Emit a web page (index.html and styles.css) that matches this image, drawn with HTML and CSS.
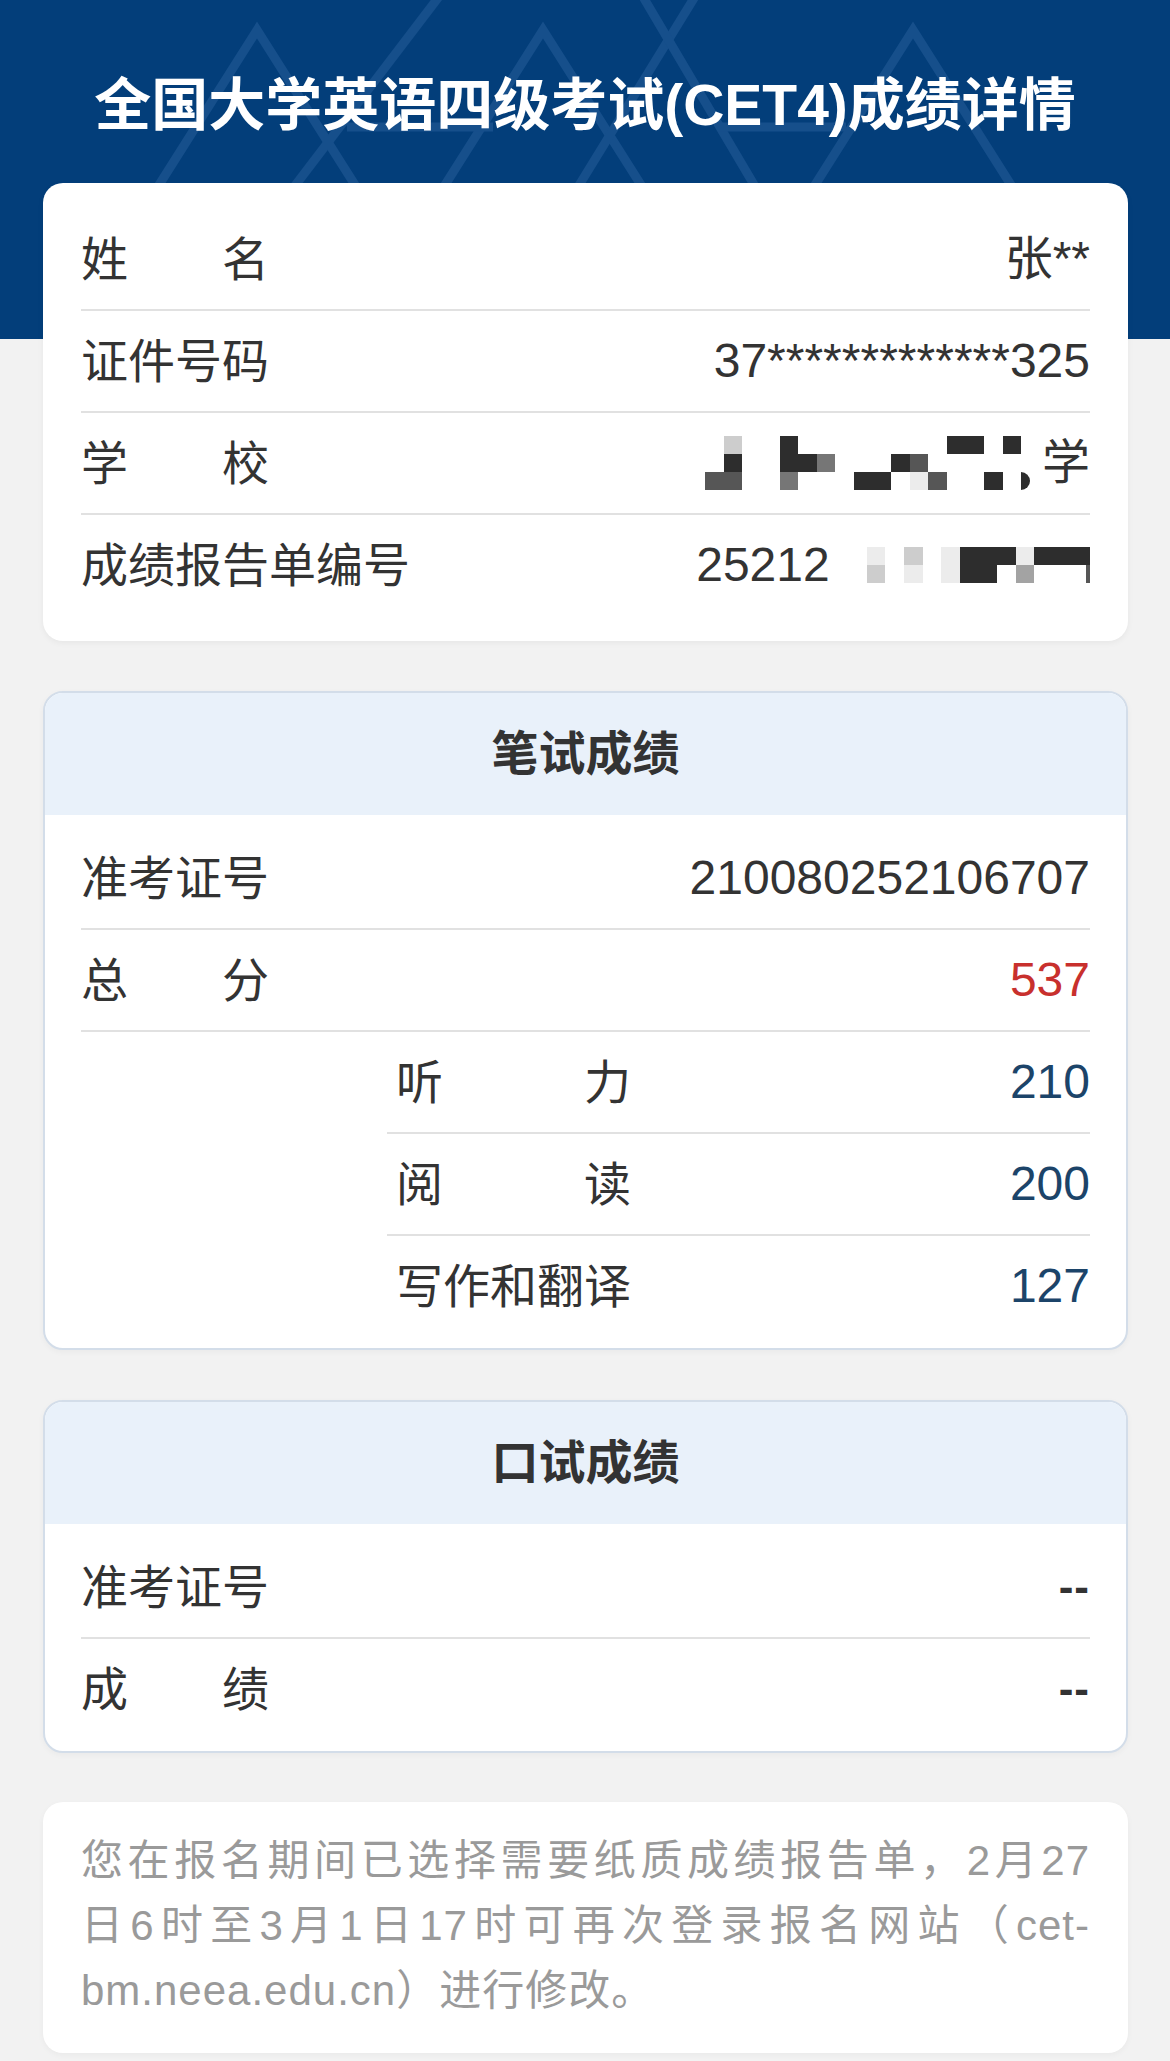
FILE: index.html
```html
<!DOCTYPE html>
<html lang="zh-CN">
<head>
<meta charset="utf-8">
<title>全国大学英语四级考试(CET4)成绩详情</title>
<link rel="stylesheet" href="styles.css">
</head>
<body>
<header class="top">
  <svg class="pattern" viewBox="0 0 1170 339" aria-hidden="true">
    <g fill="none" stroke="#164f8b" stroke-width="9" stroke-linejoin="miter">
      <polyline points="140,215 257,30 374,215"/>
      <polyline points="426,215 543,30 660,215"/>
      <polyline points="796,215 913,30 1030,215"/>
      <line x1="444" y1="-10" x2="278" y2="208"/>
      <line x1="347" y1="127" x2="493" y2="127"/>
      <line x1="699" y1="-10" x2="570" y2="200"/>
      <line x1="639" y1="-10" x2="763" y2="200"/>
      <line x1="719" y1="127" x2="846" y2="127"/>
    </g>
  </svg>
  <h1 class="title">全国大学英语四级考试(CET4)成绩详情</h1>
</header>

<main class="content">
  <section class="card info">
    <div class="row">
      <span class="label sp4"><span>姓</span><span>名</span></span>
      <span class="value">张**</span>
    </div>
    <div class="row">
      <span class="label">证件号码</span>
      <span class="value">37*************325</span>
    </div>
    <div class="row">
      <span class="label sp4"><span>学</span><span>校</span></span>
      <span class="value masked">
        <span class="mosaic school">
          <i></i><i class="k5"></i><i></i><i></i><i class="k1"></i><i></i><i></i><i></i><i></i><i></i><i></i><i></i><i></i><i class="k1"></i><i class="k1"></i><i></i><i class="k1"></i><i></i>
          <i></i><i class="k1"></i><i></i><i></i><i class="k1"></i><i class="k1"></i><i class="k3"></i><i></i><i></i><i></i><i class="k1"></i><i class="k2"></i><i></i><i></i><i></i><i></i><i></i><i></i>
          <i class="k2"></i><i class="k2"></i><i></i><i></i><i class="k3"></i><i></i><i></i><i></i><i class="k1"></i><i class="k1"></i><i></i><i class="k6"></i><i class="k2"></i><i></i><i></i><i class="k1"></i><i></i><i class="k1 half"></i>
        </span>学
      </span>
    </div>
    <div class="row">
      <span class="label">成绩报告单编号</span>
      <span class="value masked">25212
        <span class="mosaic report">
          <i></i><i></i><i class="k6"></i><i></i><i class="k5"></i><i></i><i class="k6"></i><i class="k1"></i><i class="k1"></i><i class="k1"></i><i class="k6"></i><i class="k1"></i><i class="k1"></i><i class="k1"></i>
          <i></i><i></i><i class="k5"></i><i></i><i class="k6"></i><i></i><i class="k6"></i><i class="k1"></i><i class="k1"></i><i></i><i class="k4"></i><i></i><i></i><i class="k2 thin"></i>
        </span>
      </span>
    </div>
  </section>

  <section class="card panel">
    <h2 class="card-head">笔试成绩</h2>
    <div class="card-body">
      <div class="row">
        <span class="label">准考证号</span>
        <span class="value">210080252106707</span>
      </div>
      <div class="row">
        <span class="label sp4"><span>总</span><span>分</span></span>
        <span class="value total">537</span>
      </div>
      <div class="subrows">
        <div class="row sub">
          <span class="label sp5"><span>听</span><span>力</span></span>
          <span class="value part">210</span>
        </div>
        <div class="row sub">
          <span class="label sp5"><span>阅</span><span>读</span></span>
          <span class="value part">200</span>
        </div>
        <div class="row sub">
          <span class="label">写作和翻译</span>
          <span class="value part">127</span>
        </div>
      </div>
    </div>
  </section>

  <section class="card panel">
    <h2 class="card-head">口试成绩</h2>
    <div class="card-body">
      <div class="row">
        <span class="label">准考证号</span>
        <span class="value dash">--</span>
      </div>
      <div class="row">
        <span class="label sp4"><span>成</span><span>绩</span></span>
        <span class="value dash">--</span>
      </div>
    </div>
  </section>

  <section class="card note">
    <p class="note-text">
      <span class="ln full">您在报名期间已选择需要纸质成绩报告单，2月27</span>
      <span class="ln full">日6时至3月1日17时可再次登录报名网站（cet-</span>
      <span class="ln">bm.neea.edu.cn）进行修改。</span>
    </p>
  </section>
</main>
</body>
</html>
```

FILE: styles.css
```css
* {
  box-sizing: border-box;
}

html,
body {
  margin: 0;
  padding: 0;
}

body {
  width: 1170px;
  background: #f2f2f2;
  color: #333;
  font-family: "Liberation Sans", "Noto Sans CJK SC", sans-serif;
}

/* ---------- header ---------- */
.top {
  position: relative;
  height: 339px;
  background: #033e7a;
  overflow: hidden;
}

.pattern {
  position: absolute;
  left: 0;
  top: 0;
  width: 1170px;
  height: 339px;
}

.title {
  position: relative;
  margin: 0;
  padding-top: 64px;
  text-align: center;
  color: #fff;
  font-size: 57px;
  line-height: 82px;
  font-weight: 700;
}

/* ---------- content ---------- */
.content {
  position: relative;
  margin: -156px 42px 0 43px;
  padding-bottom: 10px;
  display: flex;
  flex-direction: column;
  gap: 50px;
}

.card {
  background: #fff;
  border-radius: 20px;
  overflow: hidden;
}

.info {
  padding: 26px 38px;
  box-shadow: 0 2px 6px rgba(0, 0, 0, 0.05);
}

.row {
  display: flex;
  align-items: center;
  justify-content: space-between;
  height: 102px;
  border-bottom: 2px solid #e1e1e1;
  font-size: 47px;
  line-height: 1;
}

.row:last-child {
  height: 100px;
  border-bottom: none;
}

.label {
  white-space: nowrap;
  color: #333;
}

.sp4 {
  display: flex;
  justify-content: space-between;
  width: 188px;
}

.sp5 {
  display: flex;
  justify-content: space-between;
  width: 235px;
}

.value {
  white-space: nowrap;
  color: #333;
  font-size: 48px;
}

.total {
  color: #c8302d;
}

.part {
  color: #1c4469;
}

.dash {
  font-weight: 700;
  letter-spacing: 1px;
  font-size: 44px;
}

/* masked (pixelated) values */
.masked {
  display: flex;
  align-items: center;
}

.mosaic {
  display: grid;
  grid-auto-rows: 18px;
}

.mosaic i {
  display: block;
}

.school {
  grid-template-columns: repeat(18, 18.6px);
  margin-right: 2px;
}

.report {
  grid-template-columns: repeat(14, 18.6px);
}

.k1 { background: #2d2d2d; }
.k2 { background: #565656; }
.k3 { background: #767676; }
.k4 { background: #a3a3a3; }
.k5 { background: #cdcdcd; }
.k6 { background: #ececec; }

.half {
  border-radius: 0 10px 10px 0;
  width: 9px;
}

.thin {
  width: 4px;
  justify-self: end;
}

/* ---------- score panels ---------- */
.panel {
  border: 2px solid #d3dde9;
  box-shadow: 0 2px 6px rgba(0, 0, 0, 0.04);
}

.card-head {
  margin: 0;
  height: 122px;
  line-height: 122px;
  background: #e9f1fa;
  text-align: center;
  font-size: 47px;
  font-weight: 700;
  color: #333;
}

.card-body {
  padding: 13px 36px 12px;
}

.subrows {
  margin-left: 306px;
}

.sub .label {
  margin-left: 9px;
}

/* ---------- note ---------- */
.note {
  margin-top: -1px;
  padding: 26px 38px 30px;
  box-shadow: 0 2px 6px rgba(0, 0, 0, 0.04);
}

.note-text {
  margin: 0;
  font-size: 42px;
  line-height: 65px;
  letter-spacing: 1px;
  color: #9a9a9a;
}

.ln {
  display: block;
  white-space: nowrap;
}

.full {
  text-align: justify;
  text-align-last: justify;
}
```
